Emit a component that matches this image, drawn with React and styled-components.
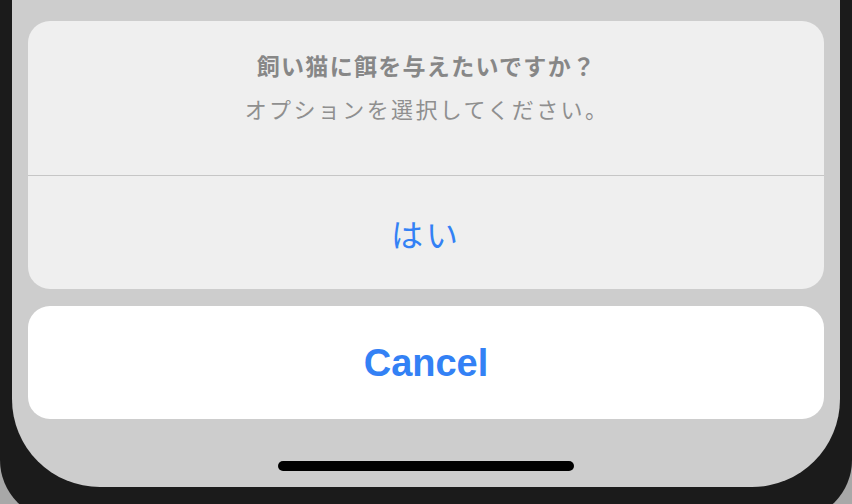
import React from "react";
import styled, { createGlobalStyle } from "styled-components";

const Global = createGlobalStyle`
  html, body {
    margin: 0;
    padding: 0;
    background: #a8a8a8;
    overflow: hidden;
  }
  body {
    font-family: "Noto Sans CJK JP", "Noto Sans", sans-serif;
  }
`;

export default function App() {
  return (
    <>
      <Global />
      <Frame>
        <Screen>
          <Sheet>
            <Group>
              <Header>
                <Title>飼い猫に餌を与えたいですか？</Title>
                <Message>オプションを選択してください。</Message>
              </Header>
              <Action>はい</Action>
            </Group>
            <CancelCard>
              <CancelText>Cancel</CancelText>
            </CancelCard>
          </Sheet>
          <HomeBar />
        </Screen>
      </Frame>
    </>
  );
}

const Frame = styled.div`
  width: 852px;
  height: 520px;
  background: #1b1b1b;
  border-radius: 0 0 60px 60px;
  box-sizing: border-box;
  padding: 0 12px;
`;

const Screen = styled.div`
  height: 487px;
  background: #cdcdcd;
  border-radius: 0 0 88px 88px;
  padding: 21px 16px 0;
  box-sizing: border-box;
  display: flex;
  flex-direction: column;
  align-items: center;
`;

const Sheet = styled.div`
  width: 100%;
  display: flex;
  flex-direction: column;
  gap: 17px;
`;

const Group = styled.div`
  background: #efefef;
  border-radius: 22px;
  overflow: hidden;
  display: flex;
  flex-direction: column;
`;

const Header = styled.div`
  height: 155px;
  box-sizing: border-box;
  border-bottom: 1px solid #c6c6c6;
  display: flex;
  flex-direction: column;
  align-items: center;
  padding-top: 26px;
`;

const Title = styled.div`
  font-size: 23px;
  font-weight: 700;
  color: #878787;
  letter-spacing: 1.3px;
  line-height: 36px;
  margin-left: 1px;
`;

const Message = styled.div`
  font-size: 22px;
  color: #8f8f8f;
  letter-spacing: 2.4px;
  line-height: 36px;
  margin-top: 7px;
  margin-left: 2px;
`;

const Action = styled.div`
  height: 113px;
  display: flex;
  align-items: center;
  justify-content: center;
  font-size: 32px;
  color: #3381f5;
  letter-spacing: 3px;
`;

const CancelCard = styled.div`
  height: 113px;
  background: #ffffff;
  border-radius: 22px;
  display: flex;
  align-items: center;
  justify-content: center;
`;

const CancelText = styled.span`
  font-family: "Liberation Sans", Arial, sans-serif;
  font-size: 38px;
  font-weight: 700;
  color: #3381f5;
  margin-top: 2px;
`;

const HomeBar = styled.div`
  width: 296px;
  height: 10px;
  border-radius: 5px;
  background: #000;
  margin-top: 42px;
`;
